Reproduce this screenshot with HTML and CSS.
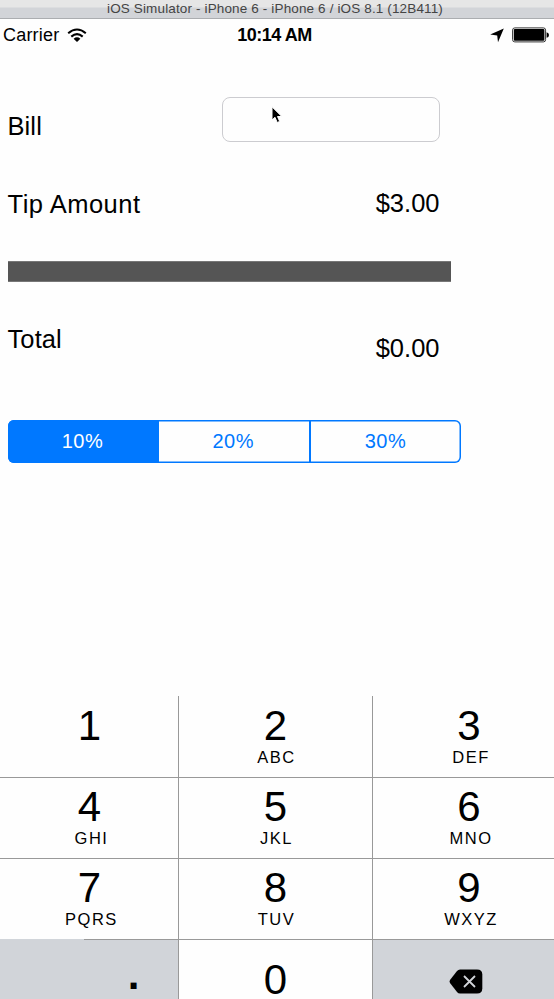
FILE: index.html
```html
<!DOCTYPE html>
<html lang="en">
<head>
<meta charset="utf-8">
<title>Tip Calculator</title>
<link rel="stylesheet" href="styles.css">
</head>
<body>
<div class="window">
  <header class="titlebar"><span>iOS Simulator - iPhone 6 - iPhone 6 / iOS 8.1 (12B411)</span></header>
  <div class="status">
    <div class="status-left">
      <span class="carrier">Carrier</span>
      <svg class="wifi" width="20" height="15" viewBox="0 0 20 15"><g fill="none" stroke="#000" stroke-width="2.1"><path d="M1.2 5.2Q10 -2.2 18.8 5.2"/><path d="M4.3 8.6Q10 3.6 15.7 8.6"/></g><path d="M6.6 10.7Q10 7.9 13.4 10.7L10 14Z"/></svg>
    </div>
    <span class="clock">10:14 AM</span>
    <div class="status-right">
      <svg width="14" height="15" viewBox="0 0 14 15"><path d="M13.8 .5L8 14.3L7.2 7.5L.2 6.6Z"/></svg>
      <svg width="38" height="16" viewBox="0 0 38 16"><rect x=".6" y=".9" width="33" height="14" rx="2.2" fill="#fff" stroke="#333" stroke-width="1"/><rect x="1.8" y="2.1" width="30.6" height="11.6" rx="1"/><path d="M34.6 5.2Q37 5.6 37 8T34.6 10.8Z"/></svg>
    </div>
  </div>
  <main class="form">
    <div class="row bill">
      <span class="label">Bill</span>
      <div class="field"><svg class="cursor" width="12" height="18" viewBox="0 0 12 18"><path d="M1 .8V14L4 11.3L6.2 16.5L8.7 15.4L6.5 10.5H10.8Z" stroke="#fff" stroke-width="1"/></svg></div>
    </div>
    <div class="row tip"><span class="label">Tip Amount</span><span class="amount">$3.00</span></div>
    <div class="rule"></div>
    <div class="row total"><span class="label">Total</span><span class="amount">$0.00</span></div>
    <div class="segments">
      <div class="segment selected">10%</div>
      <div class="segment">20%</div>
      <div class="segment">30%</div>
    </div>
  </main>
  <div class="keypad">
    <div class="key"><b>1</b></div>
    <div class="key"><b>2</b><i>ABC</i></div>
    <div class="key"><b>3</b><i>DEF</i></div>
    <div class="key"><b>4</b><i>GHI</i></div>
    <div class="key"><b>5</b><i>JKL</i></div>
    <div class="key"><b>6</b><i>MNO</i></div>
    <div class="key short"><b>7</b><i>PQRS</i></div>
    <div class="key"><b>8</b><i>TUV</i></div>
    <div class="key"><b>9</b><i>WXYZ</i></div>
    <div class="key gray point"><b>.</b></div>
    <div class="key zero"><b>0</b></div>
    <div class="key gray erase"><svg width="34" height="25" viewBox="0 0 34 25"><path d="M11 .5H28Q33.3 .5 33.3 5.5V19.5Q33.3 24.5 28 24.5H11Q9.3 24.5 8 23L1 14Q0 12.5 1 11L8 2Q9.3 .5 11 .5Z"/><path d="M15 7L26 18M26 7L15 18" stroke="#d1d4d9" stroke-width="1.8"/></svg></div>
  </div>
</div>
</body>
</html>
```
FILE: styles.css
```css
* { box-sizing: border-box; }
body { margin: 0; background: #fefefe; color: #000; font-family: "Liberation Sans", Arial, sans-serif; }
.window { width: 554px; height: 999px; overflow: hidden; display: flex; flex-direction: column; }
svg { display: block; }
.titlebar { height: 19px; flex: none; background: linear-gradient(#e6e6e6 0 7px, #d2d4d8 8px); border-bottom: 1px solid #abadb0; color: #444; font-size: 13.5px; line-height: 17px; letter-spacing: .14px; padding-left: 107px; white-space: nowrap; }
.status { height: 31px; flex: none; display: grid; grid-template-columns: 1fr auto 1fr; padding: 0 4px 0 3px; line-height: 32px; font-size: 18px; }
.status-left, .status-right { display: flex; align-items: center; }
.carrier { letter-spacing: .2px; }
.wifi { margin-left: 8px; }
.status-right { justify-content: flex-end; gap: 8px; }
.clock { font-weight: bold; font-size: 18px; letter-spacing: -.5px; padding-right: 4px; }
.form { height: 646px; flex: none; padding: 47px 0 0 7.5px; font-size: 25.5px; }
.row { width: 432.5px; display: flex; justify-content: space-between; line-height: 30px; }
.label { letter-spacing: .1px; }
.amount { padding-right: .5px; }
.bill { height: 45px; }
.bill .label { padding-top: 14px; }
.field { width: 218px; height: 45px; border: 1px solid #ccccd0; border-radius: 8px; padding: 8px 0 0 48px; }
.tip { margin-top: 46px; height: 73px; }
.tip .label { padding-top: 1px; letter-spacing: .5px; }
.rule { width: 443px; height: 21px; background: #555; border: 1px solid #777; border-width: 1px 0; }
.total { margin-top: 42px; height: 96px; }
.total .amount { padding-top: 9px; }
.segments { width: 453.5px; height: 43px; display: grid; grid-template-columns: 151px 150.5px 1fr; box-shadow: inset 0 0 0 1.5px #0078ff; border-radius: 6px; overflow: hidden; }
.segment { color: #0078ff; font-size: 20px; line-height: 43px; text-align: center; letter-spacing: .5px; padding-right: 1px; }
.segment:last-child { border-left: 2px solid #0078ff; }
.segment.selected { background: #0078ff; color: #fff; }
.keypad { display: grid; grid-template-columns: 179px 194px 181px; grid-template-rows: 82px 81px 81px 59px; }
.key { display: flex; flex-direction: column; align-items: center; border: 0 solid #999; border-width: 0 1px 1px 0; padding-top: 8px; }
.key:nth-child(3n+1) { padding-left: 1px; }
.key:nth-child(3n) { border-right: 0; padding-left: 11px; }
.key:nth-child(-n+3) { padding-top: 9px; }
.key:nth-child(n+10) { border-bottom: 0; }
.key b { font-weight: normal; font-size: 42px; line-height: 42px; }
.key i { font-style: normal; font-size: 16.5px; line-height: 20px; letter-spacing: 1.5px; padding-left: 2px; }
.key:nth-child(3n) i, .key:nth-child(3n+1) i { padding-left: 4px; }
.short { border-image: linear-gradient(90deg, #d1d5da 0 85px, #999 85px) 1; }
.gray { background: #d1d4d9; }
.key.zero { padding-top: 21px; }
.key.zero b { line-height: 38px; }
.key.point { padding: 14px 0 0 89px; }
.key.point b { font-weight: bold; }
.key.erase { padding: 29px 0 0 4px; }
```
